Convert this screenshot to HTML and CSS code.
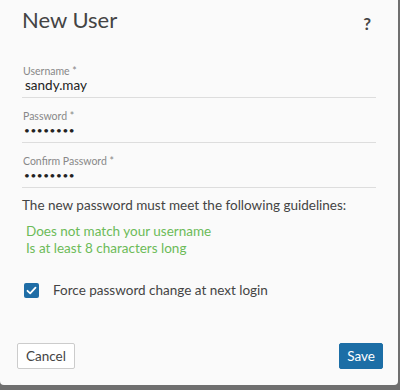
FILE: index.html
```html
<!DOCTYPE html>
<html lang="en">
<head>
<meta charset="UTF-8">
<meta name="viewport" content="width=device-width, initial-scale=1.0">
<title>New User</title>
<link rel="stylesheet" href="styles.css">
</head>
<body>

<div class="dialog">
    <div class="dialog-header">
        <h1>New User</h1>
        <span class="help">?</span>
    </div>

    <div class="fields">
        <div class="field">
            <label>Username *</label>
            <div class="value">sandy.may</div>
        </div>
        <div class="field">
            <label>Password *</label>
            <div class="value dots">&#8226;&#8226;&#8226;&#8226;&#8226;&#8226;&#8226;&#8226;</div>
        </div>
        <div class="field">
            <label>Confirm Password *</label>
            <div class="value dots">&#8226;&#8226;&#8226;&#8226;&#8226;&#8226;&#8226;&#8226;</div>
        </div>
    </div>

    <p class="guidelines">The new password must meet the following guidelines:</p>
    <ul class="rules">
        <li>Does not match your username</li>
        <li>Is at least 8 characters long</li>
    </ul>

    <div class="check-row">
        <span class="checkbox">
            <svg width="11" height="9" viewBox="0 0 11 9"><path d="M1.5 4.8 L4.2 7.3 L9.5 1.6" fill="none" stroke="#fff" stroke-width="1.8" stroke-linecap="round" stroke-linejoin="round"/></svg>
        </span>
        <span>Force password change at next login</span>
    </div>

    <div class="dialog-footer">
        <button class="btn">Cancel</button>
        <button class="btn primary">Save</button>
    </div>
</div>

</body>
</html>
```

FILE: styles.css
```css
body {
    margin: 0;
    padding: 0;
    background-color: #6f6f6f;
    font-family: Lato, "Open Sans", sans-serif;
    color: #444444;
}
.dialog {
    width: 398px;
    height: 385px;
    box-sizing: border-box;
    background-color: #fafafa;
    border-radius: 0 0 4px 4px;
    padding: 0 22px;
    display: flex;
    flex-direction: column;
}
.dialog-header {
    display: flex;
    justify-content: space-between;
    align-items: center;
    padding-top: 5px;
    margin-bottom: 31px;
}
.dialog-header h1 {
    margin: 0;
    font-size: 22px;
    font-weight: normal;
    line-height: 30px;
    color: #444444;
}
.help {
    font-size: 17px;
    font-weight: bold;
    color: #444444;
    margin-right: 5px;
    margin-top: 6px;
}
.fields {
    display: flex;
    flex-direction: column;
    gap: 13px;
    margin-bottom: 8px;
}
.field {
    border-bottom: 1px solid #dddddd;
    padding-bottom: 3px;
}
.field label {
    display: block;
    font-size: 10.5px;
    line-height: 11px;
    color: #888888;
    padding-left: 1px;
}
.field .value {
    font-size: 13.5px;
    line-height: 17px;
    color: #222222;
    padding-left: 3px;
}
.field .dots {
    font-size: 10px;
    letter-spacing: 0.6px;
    padding-left: 2px;
}
.guidelines {
    margin: 0;
    font-size: 13.5px;
    line-height: 18px;
    color: #444444;
}
.rules {
    list-style: none;
    margin: 9px 0 0 0;
    padding: 0 0 0 4px;
    font-size: 13.5px;
    line-height: 17px;
    color: #6cbb58;
}
.check-row {
    display: flex;
    align-items: center;
    gap: 14px;
    margin-top: 25px;
    padding-left: 2px;
    font-size: 13.5px;
    color: #444444;
}
.checkbox {
    width: 15px;
    height: 15px;
    border-radius: 2px;
    background-color: #1f6da6;
    display: flex;
    align-items: center;
    justify-content: center;
}
.dialog-footer {
    margin-top: auto;
    margin-bottom: 16px;
    display: flex;
    justify-content: space-between;
    margin-left: -5px;
    margin-right: -7px;
}
.btn {
    font-family: Lato, "Open Sans", sans-serif;
    font-size: 13.5px;
    height: 26px;
    padding: 0 8px;
    border: 1px solid #cccccc;
    border-radius: 2px;
    background-color: #ffffff;
    color: #444444;
}
.btn.primary {
    background-color: #1c6ea6;
    border-color: #1c6ea6;
    color: #ffffff;
    padding: 0 7px;
}
```
